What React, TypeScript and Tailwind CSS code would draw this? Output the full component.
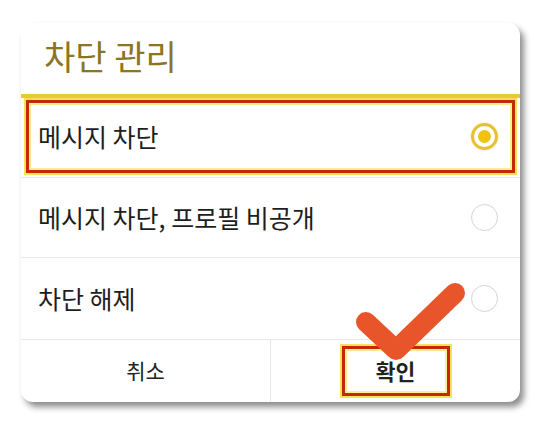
import React from "react";

const font = { fontFamily: '"Noto Sans CJK KR", "Noto Sans", sans-serif' };

function Radio({ checked }: { checked?: boolean }) {
  if (checked) {
    return (
      <div className="w-[27px] h-[27px] rounded-full border-[3px] border-[#e8c22c] shadow-[0_0_2px_#f3dc7a] flex items-center justify-center">
        <div className="w-[13px] h-[13px] rounded-full bg-[#f2c210]" />
      </div>
    );
  }
  return <div className="w-[27px] h-[27px] rounded-full border border-[#d4d4d4]" />;
}

export default function App() {
  return (
    <div className="w-[558px] h-[424px] bg-white pt-[23px] pl-[21px]" style={font}>
      <div className="relative w-[499px] bg-white rounded-[12px] shadow-[4px_5px_6px_rgba(0,0,0,0.45)]">
        <div className="h-[71px] flex items-center pl-[23px] pb-[5px]">
          <h1 className="text-[34px] text-[#8a7524] leading-none">차단 관리</h1>
        </div>
        <div className="h-[4px] bg-[#e9c92f]" />

        {/* selected option, highlighted */}
        <div className="h-[80px] border-b border-[#e8e8e8] px-[5px] pt-[2px] pb-[4px]">
          <div className="h-full flex items-center justify-between border-[3px] border-[#c6280c] shadow-[0_0_0_2px_#f7e35a,inset_0_0_0_2px_#fbef96] pl-[9px] pr-[14px]">
            <span className="text-[25px] text-[#1e1e1e]">메시지 차단</span>
            <Radio checked />
          </div>
        </div>

        <div className="h-[80px] border-b border-[#e8e8e8] flex items-center justify-between pl-[17px] pr-[22px]">
          <span className="text-[25px] text-[#1e1e1e]">메시지 차단, 프로필 비공개</span>
          <Radio />
        </div>

        <div className="h-[82px] border-b border-[#e8e8e8] flex items-center justify-between pl-[17px] pr-[22px]">
          <span className="text-[25px] text-[#1e1e1e]">차단 해제</span>
          <Radio />
        </div>

        <div className="h-[62px] flex">
          <button className="flex-1 flex items-center justify-center text-[21px] text-[#222] border-r border-[#e8e8e8]">
            취소
          </button>
          <div className="flex-1 flex items-center justify-center">
            <button className="w-[108px] h-[50px] border-[3px] border-[#c6280c] shadow-[0_0_0_2px_#f7e35a,inset_0_0_0_2px_#fbef96] text-[21.5px] font-bold text-[#222] flex items-center justify-center">
              확인
            </button>
          </div>
        </div>

        {/* check mark annotation */}
        <svg className="absolute left-0 top-0 pointer-events-none" width="499" height="380">
          <polyline
            points="345,299 375,327 434,270"
            fill="none"
            stroke="#e8552b"
            strokeWidth="20"
            strokeLinecap="round"
            strokeLinejoin="round"
          />
        </svg>
      </div>
    </div>
  );
}
